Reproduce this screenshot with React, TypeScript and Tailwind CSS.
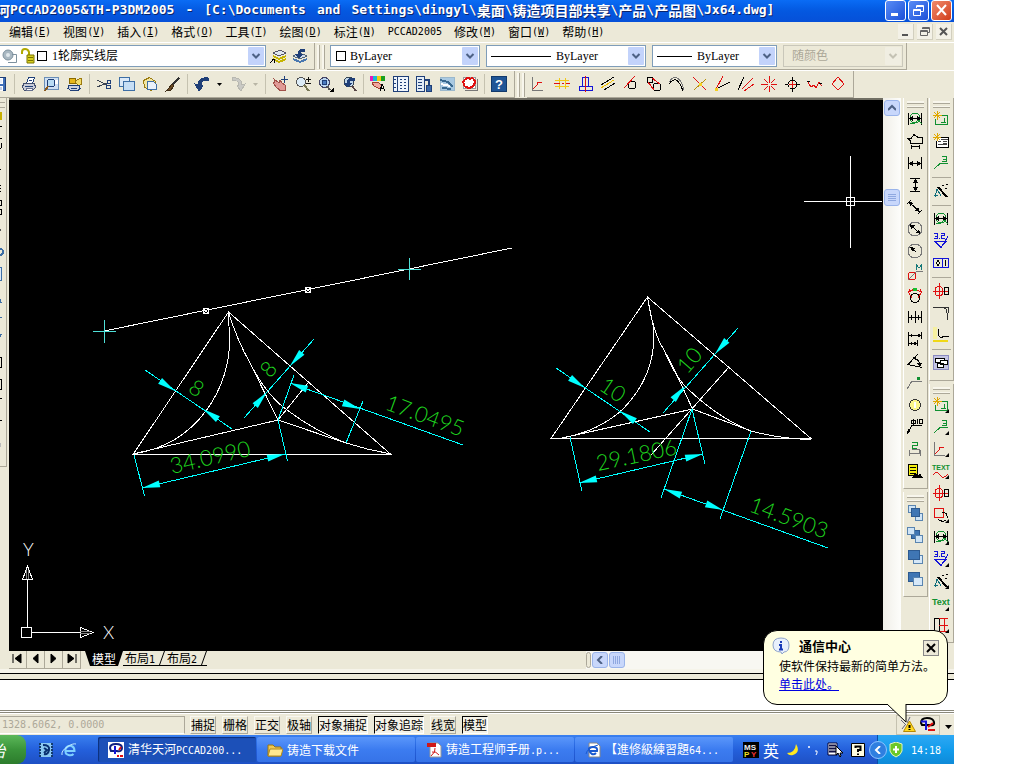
import type { ReactNode } from "react";

type StrokeProps = { d: string; c?: string; f?: string; w?: number };

const S = ({ d, c = "#000", f = "none", w = 1 }: StrokeProps) => (
    <path d={d} stroke={c} fill={f} strokeWidth={w} />
);

const RED = "#e01010";
const GREEN = "#109030";
const BLUE = "#1414d8";
const NAVY = "#1f3f78";
const GREY = "#777";

const icons: Record<string, ReactNode> = {
    save: <><S d="M1.5 1.5h13v13h-13z" c={NAVY} f="#3f6fb8" /><S d="M4.5 2v5h7V2z" c="#fff" f="#e8eefa" /><S d="M4.5 14v-4h7v4z" c="#fff" f="#c4d0e8" /></>,
    print: <><S d="M5.5 7.5l2-6h6l-2 6z" f="#fff" c={NAVY} /><S d="M2.5 7.5h11l1 4-3 3h-8l-2-3z" f="#c9ccd8" c="#44506e" /><S d="M4 10.5h8M8 4.5h3" c={NAVY} /><S d="M5 12h6v2H5z" f="#fff" c="#66708e" /></>,
    preview: <><S d="M.5 1.5h14v12H.5z" f="#cfe0f2" c="#6b8fb8" /><S d="M9 4.5h4v3h-4z" c="#fff" f="#fff" /><circle cx="7" cy="7" r="4" fill="#b9dcf4" stroke={NAVY} /><S d="M4 10l-3 5" c="#8a5a20" w={2} /></>,
    publish: <><S d="M2.5 2.5h6v5h-6z" f="#e8b81c" c="#8a6a00" /><S d="M8 5l6-3 1 6-4 2z" f="#f2dc6a" c="#9b7a10" /><S d="M2 9.5h10l1 3-2 2H4l-3-2z" f="#cdd3df" c={NAVY} /><S d="M4 12h6" c={NAVY} /></>,
    cut: <><S d="M1 4l10 5M1 11l10-4" c="#3b4454" /><circle cx="13" cy="6" r="2" fill="none" stroke={NAVY} /><circle cx="12.500" cy="11" r="2" fill="none" stroke={NAVY} /></>,
    copy: <><S d="M.5 1.5h10v9H.5z" f="#dbe9f8" c="#3d6ea5" /><S d="M4.500 5.500h11v9h-11z" f="#c6def5" c="#3d6ea5" /></>,
    paste: <><S d="M1.500 4.500l6-3 6 4-4 9-7-3z" f="#f3e6a0" c="#9a7b10" /><S d="M5.500 5.500h6l3 3v5h-9z" f="#e8f0fa" c="#3d6ea5" /></>,
    brush: <><S d="M14 2L7 9" c="#333" w={2} /><S d="M7 8l2 2-3 4-5 1 3-3z" f="#6b4a24" c="#3c2a14" /></>,
    undo: <S d="M14 2C8 1 4 4 4 9L1 8l4 7 4-5-2-1c0-3 3-5 7-5z" f={NAVY} c={NAVY} />,
    redo: <S d="M2 2c6-1 10 2 10 7l3-1-4 7-4-5 2-1c0-3-3-5-7-5z" f="#c9c9c4" c="#b8b8b0" />,
    pan: <><S d="M2 3l5 4 1-3 2 3 3 2 1 5-5 1-4-3-4-5 2-1z" f="#e09a96" c="#a05048" /><S d="M12.500 0v7M9 3.500h7" c={NAVY} /></>,
    zoomPm: <><circle cx="6" cy="6" r="4.500" fill="#dcecf8" stroke="#555" /><S d="M9 9l5 6" c="#775" w={2} /><S d="M13.500 1v5M11 3.500h5M11 7.500h5" c="#111" /></>,
    zoomWin: <><circle cx="6.500" cy="6.500" r="5" fill="#b8d4f0" stroke="#446" /><S d="M4.500 4.500h4v4h-4z" c={NAVY} f="#4a7ac0" /><S d="M9 10l3 4" c="#555" w={2} /><path d="M16 11v5h-5z" /></>,
    zoomPrev: <><circle cx="8" cy="6" r="5" fill="#bfd6ea" stroke="#345" /><S d="M13 2C8 2 6 4 6 7H3l4 4 4-4H8c0-2 2-3 5-3z" f={NAVY} c={NAVY} /><S d="M11 10l4 5" c="#544" w={2} /></>,
    props: <><path d="M0 0h3v5H0z" fill="#e21ac0" /><path d="M3 0h4v5H3z" fill="#18b8d8" /><path d="M7 0h4v5H7z" fill="#f0d010" /><path d="M11 0h4v5h-4z" fill="#18a020" /><S d="M2 7l5-1 5 3-2 4-6-3z" f="#f0a8a0" c="#a04030" /><S d="M10 15l2-7 3 7M11 12.500h3" /></>,
    grid: <><S d="M.5.500h15v15H.500z" f="#eef4fb" c={NAVY} /><S d="M4.500 0v16M7 3.500h2M11 3.500h2M7 6.500h2M11 6.500h2M7 9.500h2M11 9.500h2M7 12.500h2M11 12.500h2M1 3.500h2M1 7.500h2M1 11.500h2" c={NAVY} /></>,
    tool: <><S d="M.5.500h8v15h-8z" f="#e2ecf7" c={NAVY} /><S d="M2 3.500h4M2 6.500h4M2 9.500h4M2 12.500h4" c={NAVY} /><S d="M8 4h5v5" c={NAVY} w={2} /><S d="M10.500 9.500h5v6h-5z" f="#3a68a8" c={NAVY} /></>,
    sheet: <><S d="M1 1.500h14v13H1z" f="#a9c9e2" c="#9bb8cc" /><S d="M1 4l8 2 5 5M3 12l9 1" c="#3b6a90" w={2} /><S d="M2 8l9 2" c="#fff" w={2} /></>,
    markup: <><S d="M1.500 1.500h12v11h-12z" f="#fff" c="#999" /><S d="M3 14.500h12.500V3" c={GREY} /><S d="M4 3q2-2 4 0 3-2 4 1 2 2 0 4 0 3-3 3-2 2-4 0-3 0-3-3-2-3 2-5z" c={RED} w={2} /></>,
    help: <><rect x=".5" y=".5" width="15" height="15" rx="1" fill="#1f5596" stroke="#123a6c" /><text x="8" y="13" textAnchor="middle" className="fill-white font-bold text-[13px]" fontFamily="Liberation Sans, sans-serif">?</text></>,
    layers: <><S d="M3 5l7-3 6 3-7 3z" f="#dfe7f0" c="#556" /><S d="M3 8l6 3 7-3M3 11l6 3 7-3" c="#c6b400" w={2} /><S d="M0 15l4-4M1.500 11.500h3v3" /></>,
    layerPrev: <><S d="M1 8l7-3 7 3-7 3z" f="#cfdcec" c="#567" /><S d="M1 11l7 3 7-3" c="#4a78b0" w={2} /><S d="M12 1C8 1 6 3 6 6H3l4 4 4-4H8c0-2 1-3 4-3z" f={NAVY} c={NAVY} /></>,
    axis: <><S d="M1.500 1v13.500H12" c={GREY} /><S d="M2 13l4-4V6h5" c={RED} /></>,
    midline: <><S d="M1 4.500h14M1 10.500h14M5.500 2v11M11.500 2v11" c="#f0c818" /><S d="M0 7.500h6M8 7.500h2M12 7.500h4" c={RED} /></>,
    symm: <><S d="M5.500 10V1.500h6V10M2 10.500h13v4H2z" c={BLUE} /><S d="M8.500 0v16" c={RED} /></>,
    parallel: <><S d="M1 9l13-8" /><S d="M1 12L14 4" c="#f0c000" /><S d="M4 14L15 7" /></>,
    tangent: <><circle cx="9" cy="9" r="4" fill="none" stroke="#000" /><S d="M1 12L12 0" c={RED} /></>,
    belt: <><circle cx="4" cy="4" r="3" fill="none" stroke="#000" /><circle cx="11" cy="11" r="4" fill="none" stroke="#000" /><S d="M2 6l6 8M6 2l8 6" c={RED} /></>,
    arcs: <><S d="M0 8C6 0 10 4 14 15" /><S d="M0 6C6-3 12 2 15 14" c={GREY} /></>,
    cross: <><S d="M1 1l13 13" c={RED} /><S d="M14 3L2 14" c="#b8900c" /><path d="M7 7h3v3H7z" fill="#f5d020" /></>,
    angle: <><S d="M8 0L1 13" c={RED} /><S d="M1 13l14-7" /><path d="M0 12h3v3H0z" fill="#f5d020" /></>,
    rays: <><S d="M0 14L6 1" /><S d="M4 13L15 2M6 15l10-7" c={RED} /></>,
    star: <><S d="M8.500 0v16M0 8.500h16M3 3l11 11M14 3L3 14" c={RED} /><path d="M7 7h3v3H7z" fill="#ece9d8" /></>,
    target: <><circle cx="8.500" cy="8.500" r="4.500" fill="none" stroke="#000" /><S d="M8.500 5v7M5 8.500h7" c={RED} /><S d="M8.500 1v3M8.500 13v3M1 8.500h3M13 8.500h3" /></>,
    wave: <><S d="M1 6l3 5 3-2 2 3 3-6 3 4" c={RED} /><S d="M0 5.500h3M12 7.500h3" /></>,
    diamond: <S d="M8 1l6 7-6 6-6-6z" c={RED} />,
    dimSmart: <><circle cx="8" cy="7" r="5" fill="none" stroke={GREEN} /><S d="M1.500 2v12M14.500 2v12M2 7.500h12" /><path d="M2 7.500l4-3v6zM14 7.500l-4-3v6z" /><S d="M3 12q4 2 6-1t6 2" c={GREEN} /></>,
    dimBase: <><S d="M1 5.500h3l3-4 4 3h4v6H3.500V8z" /><S d="M4.500 12v4M12.500 12v4M4 13.500h9" /></>,
    dimH: <><S d="M1.500 2v12M14.500 2v12M2 8.500h12" /><path d="M2 8.500l4-3v6zM14 8.500l-4-3v6z" /></>,
    dimV: <><S d="M3 1.500h10M3 14.500h10M8.500 2v12" /><path d="M8.500 2l-3 4h6zM8.500 14l-3-4h6z" /></>,
    dimA: <><S d="M0 5l4-4M11 15l4-4M2 3l11 10" /><path d="M2 3l5 1-4 3zM13 13l-5-1 3-4z" /></>,
    dimDia: <><circle cx="8" cy="8" r="7" fill="none" stroke={GREY} /><S d="M3 3l10 10" /><path d="M3 4l5 0-4 4zM13 12l-5 0 4-4z" /></>,
    dimRad: <><circle cx="8" cy="8" r="7" fill="none" stroke={GREY} /><S d="M4 5l5 4" /><path d="M3 4l5 1-3 3z" /></>,
    dimM: <><circle cx="5" cy="11" r="4" fill="none" stroke={RED} /><S d="M1 15l9-9h6" c={GREY} /><S d="M9.500 5V0l2.500 3 2.500-3v5" c="#157878" /></>,
    dimArc: <><circle cx="8" cy="11" r="4.500" fill="none" stroke="#000" /><S d="M1 6q7-7 14 0M1 6l2-4M15 6l-2-4M2 6l3 5M14 6l-3 5" c={RED} /><path d="M6 1h4v3H6z" fill="#18c030" /></>,
    dimCont: <><S d="M1.500 2v12M8.500 2v12M14.500 2v12M1 8.500h14M4.500 6v5M11.500 6v5" /></>,
    dimStep: <><S d="M1.500 1v14M14.500 1v7M10.500 9v6M2 4.500h12M2 12.500h8" /><path d="M2 4.500l3-2v4zM14 4.500l-3-2v4zM2 12.500l3-2v4zM10 12.500l-3-2v4z" /></>,
    dimAng: <><S d="M11 1L1 11.500l14 3M6 5q7 1 7 8" /><path d="M5 4h4v4zM13 14l-3-4h5z" /></>,
    leader: <><S d="M0 14l5-8h10" c={GREY} /><path d="M10 2h3v3h-3z" fill={GREEN} /></>,
    bulb: <><circle cx="8" cy="8" r="5.500" fill="#fbf58a" stroke="#333" /><S d="M8 5v6" c="#fff" w={2} /></>,
    phi: <><S d="M1 14l4-8h10M4.500 4.500h4v-3h-4zM6.500 0v6M10.500 0v5M12.500.500h3v4h-3z" /><path d="M0 15l1-5 3 2z" /></>,
    dim2: <><S d="M5 1.500h5v3H5v3h5" c={GREEN} /><S d="M2.500 9v6M13.500 9v6M2 12.500h12M5 8.500h7v4" c={GREY} /></>,
    notes: <><S d="M1.500 1.500h9v11h-9z" f="#f4ee10" /><S d="M3 4.500h6M3 7.500h6M3 10.500h6" /><path d="M5 15l3-5 3 3 2-3 3 5z" /></>,
    newGreen: <><S d="M5 4.500h9.500v9h-12V8" c={GREEN} /><S d="M4.500 0v9M0 4.500h9M1 1l6 6M7 1L1 7" c="#e0a800" /><S d="M11.500 7v5M8 11.500h5" c={GREEN} /></>,
    newDoc: <><S d="M4 4.500h11.500v10h-12V8" f="#fff" /><S d="M5 8.500h3M10 8.500h4M10 10.500h4M5 11.500h9M8 6.500h7" c="#444" /><S d="M4.500 0v8M0 4.500h8M1 1l6 6M7 1L1 7" c="#e0a800" /></>,
    three: <><S d="M9 1.500h4.500v5H9M10 4h3" c={GREEN} /><S d="M1 14l6-5.500h8" c={GREEN} /></>,
    wand: <><S d="M5 4l9 10" w={2} /><S d="M4 6L2 14M4 6l4 7M1 12.500h4" c="#126e7a" /><S d="M9 2.500h2M12 5.500h2M13 1.500h2" /></>,
    rough: <><S d="M2 8.500h11l-5 6zM8 15l7-12" c={BLUE} /><S d="M1 .500h3v5H1M2 3.500h2M8 .500h3v2H8.500v3H12M6 5.500h1" c={BLUE} /></>,
    datum: <><S d="M.5 3.500h15v9H.5zM9.500 3v9" c={BLUE} /><S d="M5 5.500l2 2.500-2 2.500L3 8z" /><S d="M12.500 5v6" /></>,
    bearing: <><S d="M0 8.500h15M6.500 0v16" c={RED} /><S d="M2 5.500q4-4 7.500 0v6q-4 3-7.500 0z" c={RED} /><S d="M11.500 4.500h4v7h-4z" /></>,
    fillet: <S d="M0 2.500h9q5 0 5 5V15M10 2.500h5v5" c="#333" />,
    chamfer: <><path d="M0 0h4v12H0z" fill="#f6f0a0" /><S d="M5 2v6l3 3 3-2h5" /><S d="M0 14h15" c="#f0d818" w={2} /></>,
    block: <><S d="M.5.500h15v14H.500z" c="#8a8ac0" f="#c4c4e2" /><S d="M2.500 3.500h9v4h-9z" f="#fff" /><S d="M7.500 5.500h7v4h-7zM4.500 8.500h6v4h-6z" f="#fff" /></>,
    textWave: <><text x="-1" y="7" className="text-[7px] font-bold" fill={GREEN} fontFamily="Liberation Sans, sans-serif">TEXT</text><S d="M0 12q4-5 7 0t8-1" c={RED} /></>,
    rotate: <><S d="M1.500 1.500h9v9h-9z" c={RED} /><S d="M9 5q6 0 5 7M5 12q4 4 8 1" /></>,
    text: <text x="-1" y="10" className="text-[9px] font-bold" fill={GREEN} fontFamily="Liberation Sans, sans-serif">Text</text>,
    gate: <><S d="M1.500 1.500h5v13h-5z" /><S d="M6 1.500h9M6 8.500h9M6 14.500h9M11.500 2v12" c={RED} /></>,
    order1: <><S d="M1.500.500h7v7h-7z" f="#cfe4f6" c="#5a85b0" /><S d="M8.500 8.500h7v7h-7z" f="#cfe4f6" c="#5a85b0" /><S d="M4.500 3.500h8v8h-8z" f="#3f76b4" c="#2d5a90" /></>,
    order2: <><S d="M4.500 3.500h8v8h-8z" f="#3f76b4" c="#2d5a90" /><S d="M.5.500h7v7h-7z" f="#cfe4f6" c="#5a85b0" /><S d="M8.500 8.500h7v7h-7z" f="#cfe4f6" c="#5a85b0" /></>,
    order3: <><S d="M6.500 6.500h9v8h-9z" f="#d6e8f8" c="#5a85b0" /><S d="M1.500 1.500h11v9h-11z" f="#3f76b4" c="#2d5a90" /></>,
    order4: <><S d="M1.500 1.500h11v9h-11z" f="#3f76b4" c="#2d5a90" /><S d="M6.500 6.500h9v8h-9z" f="#d6e8f8" c="#5a85b0" /></>,
};

const Icon = ({ name, className = "" }: { name: string; className?: string }) => (
    <svg viewBox="0 0 16 16" shapeRendering="crispEdges" className={`size-4 shrink-0 overflow-visible ${className}`}>
        {icons[name]}
    </svg>
);

const ToolButton = ({ name }: { name: string }) => (
    <button aria-label={name} className="w-[23px] h-full flex items-center justify-center">
        <Icon name={name} />
    </button>
);

const ToolSep = () => (
    <div className="w-[6px] h-5 flex justify-center">
        <div className="w-px bg-[#c5c2b0]" />
    </div>
);

const Grip = () => (
    <div className="flex gap-[2px] px-[2px] h-6">
        <div className="w-[3px] bg-[#f8f6ec] border-r border-[#aca899]" />
        <div className="w-[3px] bg-[#f8f6ec] border-r border-[#aca899]" />
    </div>
);

const Caret = ({ faint = false }: { faint?: boolean }) => (
    <div className="w-[13px] flex justify-center">
        <svg viewBox="0 0 5 3" className="w-[5px] h-[3px]">
            <path d="M0 0h5L2.500 3z" fill={faint ? "#b8b5a5" : "#000"} />
        </svg>
    </div>
);

type ComboProps = { label: string; value: string; lead?: ReactNode; cjk?: boolean; disabled?: boolean; className: string };

const Combo = ({ label, value, lead, cjk = false, disabled = false, className }: ComboProps) => (
    <div className={`h-[22px] flex items-center border ${disabled ? "border-[#c9c7ba] bg-[#ece9d8]" : "border-[#7f9db9] bg-white"} ${className}`}>
        {lead}
        <select
            aria-label={label}
            disabled={disabled}
            className={`flex-1 min-w-0 h-5 appearance-none text-[12px] leading-5 ${cjk ? "font-['Liberation_Serif','Noto_Sans_CJK_SC',serif]" : "font-['Liberation_Serif',serif]"} ${disabled ? "text-[#aca899]" : "text-black"}`}
        >
            <option>{value}</option>
        </select>
        <svg viewBox="0 0 16 18" className="w-4 h-[18px] shrink-0 mr-px pointer-events-none">
            <rect width="16" height="18" rx="1" fill={disabled ? "#f0eee2" : "#c3d3fb"} />
            <path d="M4.500 7l3.500 3.500L11.500 7" fill="none" stroke={disabled ? "#c4c2b4" : "#4d6185"} strokeWidth="2" />
        </svg>
    </div>
);

// latin run set on the half-width grid of the chinese text
const L = ({ children }: { children: ReactNode }) => (
    <span className="font-['DejaVu_Sans_Mono',monospace] text-[10px]">{children}</span>
);

const menus = [
    ["编辑", "E"], ["视图", "V"], ["插入", "I"], ["格式", "O"], ["工具", "T"], ["绘图", "D"], ["标注", "N"],
    ["PCCAD2005", ""],
    ["修改", "M"], ["窗口", "W"], ["帮助", "H"],
];

const TitleBar = () => (
    <header className="h-[22px] flex items-center justify-between bg-linear-to-b from-[#0a6cf5] via-[#0458e0] to-[#0650d8] text-white overflow-hidden">
        <h1 className="flex items-center font-bold text-[14px] leading-4 pb-[2px] whitespace-nowrap [text-shadow:1px_1px_#0a246a]">
            <span className="w-[10px] overflow-hidden flex justify-end">河</span>
            <span className="flex gap-[11px] font-['DejaVu_Sans_Mono',monospace] text-[13px]">
                <span>PCCAD2005&amp;TH-P3DM2005</span>
                <span>-</span>
                <span>[C:\Documents</span>
                <span>and</span>
                <span>Settings\dingyl\</span>
            </span>
            <span>桌面</span>
            <span className="font-['DejaVu_Sans_Mono',monospace] text-[13px]">\</span>
            <span>铸造项目部共享</span>
            <span className="font-['DejaVu_Sans_Mono',monospace] text-[13px]">\</span>
            <span>产品</span>
            <span className="font-['DejaVu_Sans_Mono',monospace] text-[13px]">\</span>
            <span>产品图</span>
            <span className="font-['DejaVu_Sans_Mono',monospace] text-[13px]">\Jx64.dwg]</span>
        </h1>
        <div className="flex gap-[2px] pr-[2px] pb-[2px]">
            <button aria-label="Minimize" className="size-[21px] rounded-[3px] border border-white bg-linear-to-br from-[#5a8cf5] to-[#1c4fd8]">
                <svg viewBox="0 0 19 19"><path d="M5 12h7v3H5z" fill="#fff" /></svg>
            </button>
            <button aria-label="Restore" className="size-[21px] rounded-[3px] border border-white bg-linear-to-br from-[#5a8cf5] to-[#1c4fd8]">
                <svg viewBox="0 0 19 19" fill="none" stroke="#fff"><path d="M7.500 7V4.500h7v6H12M7 5.500h8M4.500 8.500h7v6h-7zM4 9.500h8" /></svg>
            </button>
            <button aria-label="Close" className="size-[21px] rounded-[3px] border border-white bg-linear-to-br from-[#f08a6a] to-[#d03a14]">
                <svg viewBox="0 0 19 19"><path d="M5 4l9 10M14 4L5 14" stroke="#fff" strokeWidth="2" /></svg>
            </button>
        </div>
    </header>
);

const MenuBar = () => (
    <nav className="h-5 flex items-center justify-between pl-[9px] pr-[2px]">
        <div className="flex gap-3">
            {menus.map(([name, key]) => (
                <button key={name} className="flex items-center leading-5 whitespace-nowrap">
                    {key ? name : <L>{name}</L>}
                    {key && <L>(<u>{key}</u>)</L>}
                </button>
            ))}
        </div>
        <div className="flex gap-[3px]">
            <button aria-label="Minimize drawing" className="size-4 bg-[#f3f1e7] border-r border-b border-[#d2cfbf]">
                <svg viewBox="0 0 15 15"><path d="M4 10h6v2H4z" fill="#555" /></svg>
            </button>
            <button aria-label="Restore drawing" className="size-4 bg-[#f3f1e7] border-r border-b border-[#d2cfbf]">
                <svg viewBox="0 0 15 15" fill="none" stroke="#666"><path d="M5.500 5V3.500h7v5H11M3.500 6.500h7v5h-7zM3 7.500h8M5 4.500h8" /></svg>
            </button>
            <button aria-label="Close drawing" className="size-4 bg-[#f3f1e7] border-r border-b border-[#d2cfbf]">
                <svg viewBox="0 0 15 15"><path d="M4 4l7 7M11 4l-7 7" stroke="#555" strokeWidth="2" /></svg>
            </button>
        </div>
    </nav>
);

const Swatch = () => <span className="ml-[5px] mr-1 size-[10px] shrink-0 border border-black" />;

const LayerBar = () => (
    <div className="h-7 flex items-center border-t border-white">
        <div className="h-[27px] flex items-center border-r border-b border-[#aca899] pr-[6px]">
            <Combo
                label="Layer"
                value="1轮廓实线层"
                cjk
                className="w-[266px] border-l-0"
                lead={
                    <>
                        <svg viewBox="0 0 36 16" className="w-9 h-4 shrink-0">
                            <circle cx="8" cy="7" r="5" fill="#a9b8c2" stroke="#7d919e" />
                            <circle cx="8" cy="7" r="2" fill="#dfe8ec" />
                            <path d="M12 6.500h4.500v8H8" fill="none" stroke="#7d919e" />
                            <path d="M22 6V4q0-3 3-3t4 3v3" fill="none" stroke="#b0a800" strokeWidth="2" />
                            <path d="M27 7h7v8h-7z" fill="#d8d020" stroke="#7a7400" />
                            <path d="M28 9.500h5M28 12.500h5" stroke="#7a7400" />
                        </svg>
                        <span className="size-[10px] mx-px mr-[5px] shrink-0 border border-black" />
                    </>
                }
            />
            <button aria-label="Layers" className="ml-1"><Icon name="layers" /></button>
            <button aria-label="Previous layer" className="ml-[6px]"><Icon name="layerPrev" /></button>
        </div>
        <Grip />
        <div className="h-[27px] flex items-center gap-[6px] px-[3px] border-r border-b border-[#aca899]">
            <Combo label="Color" value="ByLayer" lead={<Swatch />} className="w-[150px]" />
            <Combo label="Linetype" value="ByLayer" lead={<span className="ml-1 mr-[5px] w-[60px] h-px bg-black" />} className="w-[160px]" />
            <Combo label="Lineweight" value="ByLayer" lead={<span className="ml-1 mr-[5px] w-[35px] h-px bg-black" />} className="w-[125px]" />
            <Combo label="Plot style" value="随颜色" cjk disabled lead={<span className="w-2" />} className="w-[120px]" />
        </div>
    </div>
);

const IconBar = () => (
    <div className="h-7 flex items-center border-t border-white">
        <div className="h-[27px] flex items-center pr-[4px] border-r border-b border-[#aca899]">
            <button aria-label="save" className="w-[11px] h-4 pr-1 flex justify-end overflow-hidden">
                <Icon name="save" />
            </button>
            <ToolSep />
            <ToolButton name="print" /><ToolButton name="preview" /><ToolButton name="publish" />
            <ToolSep />
            <ToolButton name="cut" /><ToolButton name="copy" /><ToolButton name="paste" /><ToolButton name="brush" />
            <ToolSep />
            <ToolButton name="undo" /><Caret /><ToolButton name="redo" /><Caret faint />
            <ToolSep />
            <ToolButton name="pan" /><ToolButton name="zoomPm" /><ToolButton name="zoomWin" /><ToolButton name="zoomPrev" />
            <ToolSep />
            <ToolButton name="props" /><ToolButton name="grid" /><ToolButton name="tool" /><ToolButton name="sheet" /><ToolButton name="markup" />
            <ToolSep />
            <ToolButton name="help" />
        </div>
        <Grip />
        <div className="h-[27px] flex items-center pr-[4px] border-r border-b border-[#aca899]">
            {["axis", "midline", "symm", "parallel", "tangent", "belt", "arcs", "cross", "angle", "rays", "star", "target", "wave", "diamond"].map((n) => (
                <ToolButton key={n} name={n} />
            ))}
        </div>
    </div>
);

const SideGrip = () => (
    <div className="h-[10px] px-[3px] pt-[3px] flex flex-col gap-[2px]">
        <div className="h-[3px] bg-[#f8f6ec] border-b border-[#aca899]" />
        <div className="h-[3px] bg-[#f8f6ec] border-b border-[#aca899]" />
    </div>
);

const SideGroup = ({ names, corner = false }: { names: string[]; corner?: boolean }) => (
    <div className="border-r border-b border-[#aca899] border-l border-l-white pb-[6px] mb-[3px]">
        <SideGrip />
        {names.map((n, i) =>
            n === "-" ? (
                <div key={i} className="h-[6px] flex items-center px-[2px]">
                    <div className="h-px flex-1 bg-[#aca899]" />
                </div>
            ) : (
                <button key={i} aria-label={n} className="w-full h-[22px] pr-[2px] flex items-center justify-center">
                    <Icon name={n} />
                    {corner && n !== "bearing" && (
                        <svg viewBox="0 0 4 4" className="size-1 -ml-1 mt-3 shrink-0"><path d="M4 0v4H0z" /></svg>
                    )}
                </button>
            )
        )}
    </div>
);

const dimTools = ["dimSmart", "dimBase", "dimH", "dimV", "dimA", "dimDia", "dimRad", "dimM", "dimArc", "dimCont", "dimStep", "dimAng", "leader", "bulb", "phi", "dim2", "notes"];
const markTools = ["newGreen", "newDoc", "three", "-", "wand", "-", "dimSmart", "rough", "datum", "-", "bearing", "fillet", "chamfer", "-", "block"];
const flyTools = ["newGreen", "three", "axis", "textWave", "bearing", "rotate", "dimSmart", "rough", "wand", "text", "gate"];

const Arrow = ({ x, y, a }: { x: number; y: number; a: number }) => (
    <path d="M0 0L-18-3.500V3.500z" fill="#00ffff" transform={`translate(${x} ${y}) rotate(${a})`} />
);

const Dim = ({ x, y, a, children }: { x: number; y: number; a: number; children: ReactNode }) => (
    <text transform={`translate(${x} ${y}) rotate(${a})`} className="text-[22px] font-light" fill="#1fd41f">
        {children}
    </text>
);

const Drawing = () => (
    <svg viewBox="9 100 874 551" className="block w-full h-full bg-black font-['Lato',sans-serif]" role="img" aria-label="Jx64.dwg">
        <g fill="none" stroke="#fff" shapeRendering="crispEdges">
            <path d="M104 331L512 248" />
            <path d="M203 308l6 6M209 308l-6 6M203.500 308.500h5v5h-5z" />
            <path d="M305 287l6 6M311 287l-6 6M305.500 287.500h5v5h-5z" />
            <path d="M228.500 312L133 454.500H391z" />
            <path d="M228.500 312L229.500 340C230 385 200 444 133 454L278 420L346 443Q368 450 391 454" />
            <path d="M228.500 312Q237 340 250 363L278 420L308 383" />
            <path d="M250 363Q267 396 287 410Q315 431 346 443" />
            <path d="M647.500 297L551 438.500H811z" />
            <path d="M647.500 297L653 325C657 360 643 388 624 408Q600 431 562 438L692.500 409L751 431Q782 439 811 439.500" />
            <path d="M647.500 297Q653 333 664 350Q672 364 692.500 409" />
            <path d="M664 350Q676 378 687 388Q718 418 751 431M729 367L651 455" />
            <path d="M21.500 627.500h10v10h-10zM27.500 627v-47M32 632.500h48M22.500 579.500L27.500 566L32.500 579.500zM80.500 627.500L93 632.500L80.500 637.500z" />
            <path d="M80 631.500h10M80 633.500h10M26.500 570v9M28.500 570v9" stroke="#888" />
            <path d="M850.500 156v92M804 201.500h78M846.500 197.500h8v8h-8z" />
        </g>
        <g fill="none" stroke="#00ffff" shapeRendering="crispEdges">
            <path d="M93 331.500h23M104.500 320v23M398 269.500h23M409.500 258v22" stroke="#4fe0d8" />
            <path d="M145 370L232 429M244 418L314 339" />
            <path d="M134 455L144.500 496M278 420L287.500 461M142 488L285 454" />
            <path d="M278 420L294 375M346 443L363 401M290 383L463 445" />
            <path d="M556 368L650 432M663 413L738 328" />
            <path d="M570 437L582 491M692 409L705 464M579 483L703 454" />
            <path d="M692 409L661 498M751 431L720 519M664 489L828 548" />
        </g>
        <Arrow x={175} y={391} a={34} />
        <Arrow x={203} y={409} a={214} />
        <Arrow x={290} y={366} a={131} />
        <Arrow x={267} y={392} a={-49} />
        <Arrow x={142} y={488} a={167} />
        <Arrow x={285} y={454} a={-13} />
        <Arrow x={290} y={383} a={200} />
        <Arrow x={360} y={409} a={20} />
        <Arrow x={585} y={388} a={34} />
        <Arrow x={620} y={411} a={214} />
        <Arrow x={715} y={354} a={131} />
        <Arrow x={685} y={386} a={-49} />
        <Arrow x={579} y={483} a={167} />
        <Arrow x={703} y={454} a={-13} />
        <Arrow x={664} y={489} a={200} />
        <Arrow x={723} y={510} a={20} />
        <Dim x={187} y={391} a={34}>8</Dim>
        <Dim x={270} y={379} a={-49}>8</Dim>
        <Dim x={172} y={474} a={-13}>34.0990</Dim>
        <Dim x={384} y={409} a={20}>17.0495</Dim>
        <Dim x={598} y={389} a={34}>10</Dim>
        <Dim x={687} y={375} a={-49}>10</Dim>
        <Dim x={598} y={471} a={-12}>29.1806</Dim>
        <Dim x={748} y={511} a={20}>14.5903</Dim>
        <text x="103" y="639" fill="#fff" className="text-[18px] font-light">X</text>
        <text x="23" y="556" fill="#fff" className="text-[18px] font-light">Y</text>
    </svg>
);

const LeftStrip = () => (
    <div className="w-[9px] shrink-0">
        <div className="w-[7px] border-r border-b border-[#aca899]">
            <svg viewBox="0 0 6 368" className="block w-[6px] h-[368px]" shapeRendering="crispEdges">
                <path d="M0 4.500h5M0 9.500h5" stroke="#aca899" />
                <path d="M0 14h2v8H0z" fill="#c8b000" />
                <path d="M0 28.500h2M0 40.500h2" stroke="#000" />
                <path d="M0 51q3-3 1-6M0 71.500h1M0 87.500h1M0 90.500h1M0 93.500h1M0 102.500h1.500v5H0M0 111.500h1.500v5H0" fill="none" stroke="#000" />
                <path d="M0 131h1v2H0z" fill="#555" />
                <circle cx="0" cy="154" r="3" fill="none" stroke="#3d6ea5" strokeWidth="2" />
                <path d="M0 169.500h1.500v13H0" fill="#dbe9f8" stroke="#3d6ea5" />
                <path d="M0 200l2 5H0zM0 219h2v1H0zM0 236h2l-2 4z" fill="#3d6ea5" />
                <path d="M0 259.500h1.500v10H0M0 281.500h1.500v10H0M0 300.500h2M0 322.500h2" fill="none" stroke="#000" />
                <path d="M0 345h1v4H0z" fill="#bbb" />
            </svg>
        </div>
    </div>
);

const SheetTabs = () => (
    <div className="h-[18px] flex items-stretch bg-[#ece9d8]">
        <div className="flex">
            {["M3 3v9M11 3L5 7.500l6 4.500z", "M10 3L5 7.500l5 4.500z", "M5 3l5 4.500L5 12z", "M12 3v9M4 3l6 4.500L4 12z"].map((d) => (
                <button key={d} aria-label="Scroll tabs" className="w-[18px] border-r border-b border-[#aca899] flex justify-center">
                    <svg viewBox="0 0 15 15" className="size-[15px]"><path d={d} stroke="#000" /></svg>
                </button>
            ))}
        </div>
        <div className="flex pl-1 h-[15px] leading-[14px]">
            <button className="w-[38px] bg-black text-white [clip-path:polygon(0_0,100%_0,calc(100%-5px)_100%,5px_100%)]">模型</button>
            {["布局", "布局"].map((name, i) => (
                <button key={i} className="w-[42px] pl-[2px] flex items-start justify-between whitespace-nowrap border-b border-black">
                    <span>{name}<L>{i + 1}</L></span>
                    <svg viewBox="0 0 6 14" className="w-[6px] h-[14px] shrink-0"><path d="M5.500 0L.500 14" stroke="#000" fill="none" /></svg>
                </button>
            ))}
        </div>
        <div className="ml-auto w-[297px] flex bg-[#f8f7f2]">
            <div className="w-[5px] my-px rounded-sm border border-[#aca899] bg-[#ece9d8]" />
            <button aria-label="Scroll left" className="ml-px w-4 my-px rounded-[3px] border border-[#9ab4ea] bg-[#c8d7fb] flex items-center justify-center">
                <svg viewBox="0 0 8 8" className="size-2"><path d="M6 0L2 4l4 4" fill="none" stroke="#4d6185" strokeWidth="2" /></svg>
            </button>
            <div className="ml-px w-4 my-px rounded-[3px] border border-[#9ab4ea] bg-[#c8d7fb] flex items-center justify-center">
                <svg viewBox="0 0 8 8" className="size-2"><path d="M.5 0v8M2.500 0v8M4.500 0v8M6.500 0v8" stroke="#8fa8e0" /></svg>
            </div>
        </div>
    </div>
);

const ScrollBar = () => (
    <div className="w-[18px] shrink-0 mr-[2px] pt-[2px] bg-linear-to-r from-[#f0efe8] to-[#fdfdfb] flex flex-col items-center">
        <button aria-label="Scroll up" className="size-4 rounded-[3px] border border-[#9ab4ea] bg-[#c8d7fb] flex items-center justify-center">
            <svg viewBox="0 0 8 8" className="size-2"><path d="M0 6l4-4 4 4" fill="none" stroke="#4d6185" strokeWidth="2" /></svg>
        </button>
        <div className="mt-[73px] w-4 h-[17px] rounded-[3px] border border-[#9ab4ea] bg-[#c8d7fb] flex items-center justify-center">
            <svg viewBox="0 0 8 8" className="size-2"><path d="M0 .5h8M0 2.500h8M0 4.500h8M0 6.500h8" stroke="#8fa8e0" /></svg>
        </div>
    </div>
);

const modes = [
    ["捕捉", false], ["栅格", false], ["正交", false], ["极轴", false],
    ["对象捕捉", true], ["对象追踪", true], ["线宽", false], ["模型", true],
] as const;

const StatusBar = () => (
    <div className="h-[22px] flex items-center border-t border-white">
        <div className="w-[185px] h-[18px] flex items-center pl-[2px] border-r border-b border-r-[#aca899] border-b-white border-t border-t-[#aca899] text-[#aca899]">
            <L>1328.6062, 0.0000</L>
        </div>
        <div className="flex gap-[6px] ml-[5px]">
            {modes.map(([name, on]) => (
                <button key={name} className={`h-[18px] leading-[14px] border whitespace-nowrap ${on ? "border-black border-r-white border-b-white bg-[#f4f2e8]" : "border-[#f8f7f0] border-r-[#aca899] border-b-[#aca899]"}`}>
                    {name}
                </button>
            ))}
        </div>
        <div className="ml-auto flex items-center pr-[2px]">
            <div className="h-5 w-11 flex items-center justify-between px-[3px] border border-[#c5c2b0]">
                <svg viewBox="0 0 16 16" className="size-4">
                    <path d="M1 3l5 5M10 0L7 6M2 12l3-4" stroke="#667" />
                    <path d="M9.500 4L3.500 14.500h12z" fill="#ffd820" stroke="#b88a00" />
                    <path d="M9.500 8v3M9.500 12v1" stroke="#000" strokeWidth="2" />
                </svg>
                <svg viewBox="0 0 16 16" className="size-4">
                    <path d="M1 6q0-5 6-5t7 4-4 3H2z" fill="none" stroke="#000" strokeWidth="2" />
                    <path d="M1 4.500h6M6 4v9" stroke={BLUE} strokeWidth="2" />
                    <path d="M8 13h7M8 10l5-4" stroke={RED} strokeWidth="2" />
                </svg>
            </div>
            <svg viewBox="0 0 7 4" className="w-[7px] h-1 ml-[5px] mt-1"><path d="M0 0h7L3.500 4z" /></svg>
        </div>
    </div>
);

const Task = ({ icon, active = false, children }: { icon: ReactNode; active?: boolean; children: ReactNode }) => (
    <button className={`w-[158px] h-[25px] flex items-center gap-1 px-[10px] rounded-[2px] text-white leading-5 whitespace-nowrap ${active ? "bg-[#1c50b8] shadow-[inset_1px_1px_1px_#0d2f7a]" : "bg-linear-to-b from-[#5a96fa] via-[#3c7cf0] to-[#3673e8]"}`}>
        <svg viewBox="0 0 16 16" className="size-4 shrink-0">{icon}</svg>
        <span>{children}</span>
    </button>
);

const TaskBar = () => (
    <footer className="h-[29px] flex items-center bg-linear-to-b from-[#3a80f0] via-[#2460dc] to-[#1e50c4] text-white">
        <button className="w-[26px] h-full overflow-hidden rounded-r-[9px] bg-linear-to-b from-[#5cb85a] via-[#3a943a] to-[#2c7c2c] text-left italic text-[16px] leading-6">
            <span className="-ml-[11px]">始</span>
        </button>
        <div className="flex gap-[7px] ml-3 w-[60px]">
            <svg viewBox="0 0 16 16" className="size-4">
                <path d="M2 1h12v14H2z" fill="#8cc8f0" />
                <path d="M2 1v14M14 1v14" stroke="#123a6c" strokeWidth="2" strokeDasharray="2 1" />
                <path d="M5 3q7 0 6 5t-5 4M6 6l3 2-3 3" fill="none" stroke="#0a3070" strokeWidth="2" />
            </svg>
            <svg viewBox="0 0 16 16" className="size-4">
                <path d="M12.500 12q-2 2-5 1-4-1-3-6 2-4 6-3 3 1 3 5H5" fill="none" stroke="#7fd0ff" strokeWidth="2" />
                <path d="M1 13Q0 9 6 5t9-3" fill="none" stroke="#bfe8ff" />
            </svg>
        </div>
        <div className="flex gap-px">
            <Task active icon={<><rect width="16" height="16" fill="#fff" /><path d="M2 6q0-4 6-4t6 4-5 3H3z" fill="none" stroke="#102080" strokeWidth="2" /><path d="M7 4v8" stroke={BLUE} strokeWidth="2" /><path d="M9 14h2M12 14h3M11 8l2-3" stroke={RED} strokeWidth="2" /></>}>
                清华天河<L>PCCAD200...</L>
            </Task>
            <Task icon={<><path d="M1 3h5l2 2h6v9H1z" fill="#f0c850" stroke="#9a7410" /><path d="M3 7h13l-2 7H1z" fill="#ffe890" stroke="#b08a20" /></>}>
                铸造下载文件
            </Task>
            <Task icon={<><path d="M4 1h8l3 3v11H4z" fill="#fff" stroke="#999" /><path d="M1 1h9v4H1z" fill="#d01818" /><path d="M5 14q5-4 4-8M6 10q4-1 7 3" fill="none" stroke="#d01818" /></>}>
                铸造工程师手册<L>.p...</L>
            </Task>
            <Task icon={<><path d="M4 1h8l3 3v11H4z" fill="#fff" stroke="#888" /><path d="M11 11q-2 2-4 1t-3-4 4-3 4 4H5" fill="none" stroke="#1a5ad0" strokeWidth="2" /><path d="M1 12Q2 6 13 3" fill="none" stroke="#1a5ad0" /></>}>
                【進修級練習題<L>64...</L>
            </Task>
        </div>
        <div className="ml-auto flex items-center gap-2 pr-3">
            <svg viewBox="0 0 16 16" className="size-4">
                <rect width="16" height="16" fill="#000" />
                <g className="text-[8px] font-bold" fontFamily="Liberation Sans, sans-serif">
                    <text x="1" y="7.500" fill="#eee">MS</text>
                    <text x="1" y="15" fill="#f0e020">P</text>
                    <text x="8" y="15" fill="#f03030">Y</text>
                </g>
            </svg>
            <span className="text-[16px] leading-5 -ml-1">英</span>
            <svg viewBox="0 0 12 12" className="size-3"><path d="M9 0q5 8-3 11Q2 12 0 9 8 9 9 0z" fill="#ffe820" /></svg>
            <svg viewBox="0 0 12 12" className="size-3"><circle cx="2" cy="3" r="1" fill="#fff" /><path d="M8 7h2v2l-1 2" fill="none" stroke="#fff" /></svg>
            <svg viewBox="0 0 16 16" className="size-4">
                <path d="M1 1h9v12H1z" fill="#fff" stroke="#003" /><path d="M2 3.500h7M2 6.500h7M2 9.500h7" stroke="#114" strokeWidth="2" />
                <path d="M9 4v9l2-2 2 4 1-1-1-3h3z" fill="#fff" stroke="#000" />
            </svg>
            <svg viewBox="0 0 14 14" className="size-[14px]">
                <path d="M.5.500h13v13H.500z" fill="#fffde0" stroke="#000" />
                <path d="M4.500 5V3.500h5V7H7v2M7 10.500v1.500" fill="none" stroke="#000" strokeWidth="2" />
            </svg>
        </div>
        <div className="w-[77px] h-full flex items-center bg-linear-to-b from-[#2ca8f4] via-[#129cec] to-[#0f8ad8] border-l border-[#0a4fa8]">
            <button aria-label="Show hidden icons" className="-ml-[9px] size-[18px] shrink-0 rounded-full border border-[#8cc4ff] bg-[#2f7fe0] flex items-center justify-center">
                <svg viewBox="0 0 8 8" className="size-2"><path d="M6 0L2 4l4 4" fill="none" stroke="#fff" strokeWidth="2" /></svg>
            </button>
            <svg viewBox="0 0 14 16" className="w-[14px] h-4 ml-[2px] shrink-0">
                <path d="M7 0l6 2v7q-1 4-6 6-5-2-6-6V2z" fill="#6cc828" stroke="#e4f4c0" />
                <path d="M7 4v7M4 7.500h6" stroke="#fff" strokeWidth="2" />
            </svg>
            <span className="ml-2 leading-5"><L>14:18</L></span>
        </div>
    </footer>
);

const Balloon = () => (
    <aside className="absolute right-[6px] bottom-[59px] w-[185px] h-[75px] rounded-[14px] border border-black bg-[#ffffe1] pl-[15px] pt-[5px]">
        <div className="flex items-center">
            <svg viewBox="0 0 16 16" className="size-4 -ml-[6px] overflow-visible">
                <path d="M8 0q8 0 8 7t-5 7l-2 2-1-2Q0 14 0 7t8-7z" fill="#e8f0fc" stroke="#8fa4cc" />
                <path d="M8 3v2M6 7h2v4M6 11.500h4" fill="none" stroke="#1a3cb8" strokeWidth="2" />
            </svg>
            <h2 className="ml-[10px] font-bold text-[13px] leading-5">通信中心</h2>
            <button aria-label="Close message" className="ml-auto mr-2 mt-1 size-4 bg-[#ece9d8] border border-[#888]">
                <svg viewBox="0 0 14 14"><path d="M3 3l8 8M11 3l-8 8" stroke="#000" strokeWidth="2" /></svg>
            </button>
        </div>
        <p className="leading-5 whitespace-nowrap">使软件保持最新的简单方法。</p>
        <a href="#update" className="block w-fit leading-4 text-[#0000e0] underline">单击此处。</a>
        <svg viewBox="0 0 20 19" className="absolute right-[40px] -bottom-[19px] w-5 h-[19px]">
            <path d="M0 0l19 18V0z" fill="#ffffe1" />
            <path d="M0 0l19 18V0" fill="none" stroke="#000" />
        </svg>
    </aside>
);

export default function App() {
    return (
        <div className="min-h-screen bg-white pr-[70px] pb-1 flex flex-col">
            <div className="relative flex-1 flex flex-col bg-[#ece9d8] text-[12px] text-black font-['Noto_Sans_CJK_SC',sans-serif]">
                <TitleBar />
                <MenuBar />
                <LayerBar />
                <IconBar />
                <main className="flex-1 flex overflow-hidden">
                    <LeftStrip />
                    <div className="flex-1 min-w-0 flex flex-col border-t-2 border-[#716f64]">
                        <div className="flex-1 min-h-0">
                            <Drawing />
                        </div>
                        <SheetTabs />
                    </div>
                    <ScrollBar />
                    <div className="w-[25px] shrink-0 mr-px">
                        <SideGroup names={dimTools} />
                        <SideGroup names={["order1", "order2", "order3", "order4"]} />
                    </div>
                    <div className="w-[25px] shrink-0">
                        <SideGroup names={markTools} />
                        <SideGroup names={flyTools} corner />
                    </div>
                </main>
                <div className="h-[5px] bg-[#f6f4ea] border-b border-black" />
                <div className="h-[5px]" />
                <textarea aria-label="Command line" className="block h-[31px] w-full resize-none bg-white border-t border-black" />
                <div className="h-[3px] border-y border-[#8a887a] bg-white" />
                <StatusBar />
                <TaskBar />
                <Balloon />
            </div>
        </div>
    );
}
